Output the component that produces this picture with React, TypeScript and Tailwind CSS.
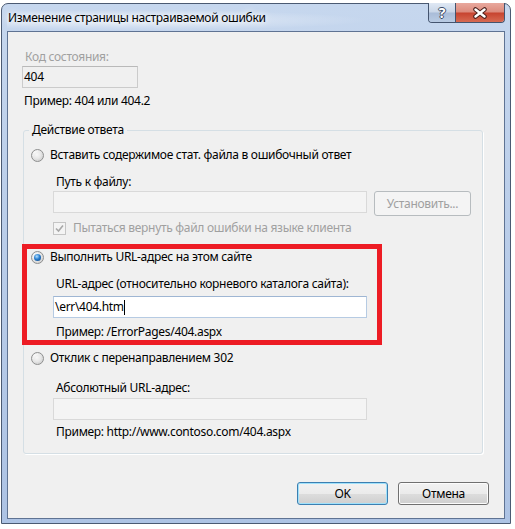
import React from "react";

function Radio({ checked }: { checked?: boolean }) {
  return (
    <span className="flex h-[13px] w-[13px] shrink-0 items-center justify-center rounded-full border border-[#8e8f8f] bg-[radial-gradient(circle_at_35%_30%,#ffffff,#d6d6d6_75%,#c4c4c4)]">
      {checked ? (
        <span className="h-[7px] w-[7px] rounded-full bg-[radial-gradient(circle_at_40%_35%,#b4e1ff,#2a7fd0_45%,#0b3c76)]" />
      ) : (
        <span className="h-[7px] w-[7px] rounded-full bg-[radial-gradient(circle_at_40%_35%,#f8f8f8,#dedede)]" />
      )}
    </span>
  );
}

function RadioRow({ checked, label }: { checked?: boolean; label: string }) {
  return (
    <div className="flex h-[16px] items-center">
      <span className="ml-[7px]">
        <Radio checked={checked} />
      </span>
      <span className="ml-[6px] leading-[16px]">{label}</span>
    </div>
  );
}

function WinButton({ label, isDefault }: { label: string; isDefault?: boolean }) {
  return (
    <div
      className={
        isDefault
          ? "flex h-[23px] w-[91px] items-center justify-center rounded-[3px] border border-[#3c7fb1] bg-[linear-gradient(180deg,#f2f2f2_0%,#ebebeb_50%,#dddddd_51%,#cfcfcf_100%)] shadow-[inset_0_0_0_1px_#9fe1fb]"
          : "flex h-[23px] w-[91px] items-center justify-center rounded-[3px] border border-[#707070] bg-[linear-gradient(180deg,#f2f2f2_0%,#ebebeb_50%,#dddddd_51%,#cfcfcf_100%)] shadow-[inset_0_0_0_1px_#fcfcfc]"
      }
    >
      {label}
    </div>
  );
}

export default function App() {
  return (
    <div className="h-[529px] w-[515px] overflow-hidden bg-white pl-[1px] pt-[3px] font-['Noto_Sans',sans-serif] text-[12px] tracking-[-0.3px] text-black">
      <div className="flex h-[521px] w-[510px] flex-col rounded-t-[7px] border border-[#4b5a72] bg-[linear-gradient(180deg,#c6d7ee_0%,#bccfea_35%,#adc3e4_100%)] px-[5px] pb-[4px]">
        {/* title bar */}
        <div className="flex h-[27px] items-start justify-between bg-[radial-gradient(ellipse_at_25%_60%,rgba(255,255,255,0.55),rgba(255,255,255,0)_45%)]">
          <div className="ml-px mt-[6px] leading-[16px] [text-shadow:0_0_6px_#fff,0_0_10px_#fff]">
            Изменение страницы настраиваемой ошибки
          </div>
          <div className="-mt-px flex h-[20px] overflow-hidden rounded-b-[4px] border border-t-0 border-[#44546e]">
            <div className="flex w-[27px] items-center justify-center border-r border-[#44546e] bg-[linear-gradient(180deg,#dfe8f4_0%,#c9d6e8_48%,#a9bcd8_52%,#b9cbe3_100%)]">
              <span className="text-[14px] font-bold leading-none tracking-normal text-white [text-shadow:1px_0_0_#3a4a66,-1px_0_0_#3a4a66,0_1px_0_#3a4a66,0_-1px_0_#3a4a66]">
                ?
              </span>
            </div>
            <div className="flex w-[48px] items-center justify-center bg-[linear-gradient(180deg,#e9a99e_0%,#dc8a7c_48%,#c7432f_52%,#d76a52_100%)]">
              <svg width="16" height="12" viewBox="0 0 16 12">
                <path d="M3.5 2.5 L12.5 9.5 M12.5 2.5 L3.5 9.5" stroke="#4a1f1a" strokeWidth="4.5" strokeLinecap="round" />
                <path d="M3.5 2.5 L12.5 9.5 M12.5 2.5 L3.5 9.5" stroke="#ffffff" strokeWidth="2.5" strokeLinecap="round" />
              </svg>
            </div>
          </div>
        </div>

        {/* client area */}
        <div className="relative flex flex-1 flex-col border border-[#5f7393] bg-[#f0f0f0] pl-[14px] pt-[17px]">
          <div className="ml-[3px] leading-[16px] text-[#a0a0a0]">Код состояния:</div>
          <div className="mt-px flex h-[22px] w-[116px] items-center border border-[#cbcbcb] border-t-[#b9b9b9] bg-[#f0f0f0] pl-[1px]">
            404
          </div>
          <div className="ml-[2px] mt-[5px] leading-[16px]">Пример: 404 или 404.2</div>

          {/* group box */}
          <div className="relative ml-px mt-[21px] w-[460px] rounded-[3px] border border-[#d5dfe5] pb-[13px] pt-[16px] shadow-[1px_1px_0_#ffffff]">
            <span className="absolute left-[5px] top-[-9px] bg-[#f0f0f0] px-[3px] leading-[16px]">
              Действие ответа
            </span>

            <RadioRow label="Вставить содержимое стат. файла в ошибочный ответ" />
            <div className="ml-[29px]">
              <div className="ml-[3px] mt-[11px] leading-[16px]">Путь к файлу:</div>
              <div className="mt-px flex items-start">
                <div className="h-[22px] w-[314px] border border-[#d9d9d9] bg-[#f4f4f4]" />
                <div className="ml-[7px] flex h-[25px] w-[97px] items-center justify-center rounded-[3px] border border-[#b7bcbf] bg-[#f4f4f4] text-[#a0a0a0]">
                  Установить...
                </div>
              </div>
              <div className="mt-[4px] flex h-[16px] items-center">
                <span className="flex h-[13px] w-[13px] items-center justify-center border border-[#c5c5c5] bg-[#f4f4f4]">
                  <svg width="9" height="9" viewBox="0 0 9 9">
                    <path d="M1 4.5 L3.5 7 L8 1.5" stroke="#a8a8a8" strokeWidth="1.6" fill="none" />
                  </svg>
                </span>
                <span className="ml-[7px] text-[#a0a0a0]">Пытаться вернуть файл ошибки на языке клиента</span>
              </div>
            </div>

            <div className="mt-[13px]">
              <RadioRow checked label="Выполнить URL-адрес на этом сайте" />
            </div>
            <div className="ml-[29px]">
              <div className="ml-[3px] mt-[11px] leading-[16px]">
                URL-адрес (относительно корневого каталога сайта):
              </div>
              <div className="mt-[4px] flex h-[22px] w-[314px] items-center border border-[#b6cbe3] border-t-[#9fb6d3] bg-white pl-[1px]">
                <span>\err\404.htm</span>
                <span className="h-[15px] w-px bg-black" />
              </div>
              <div className="ml-[3px] mt-[6px] leading-[16px]">Пример: /ErrorPages/404.aspx</div>
            </div>

            <div className="mt-[10px]">
              <RadioRow label="Отклик с перенаправлением 302" />
            </div>
            <div className="ml-[29px]">
              <div className="ml-[3px] mt-[14px] leading-[16px]">Абсолютный URL-адрес:</div>
              <div className="mt-[2px] h-[22px] w-[314px] border border-[#d9d9d9] bg-[#f4f4f4]" />
              <div className="ml-[3px] mt-[4px] leading-[16px]">Пример: http://www.contoso.com/404.aspx</div>
            </div>
          </div>

          <div className="mr-[15px] mt-[28px] flex justify-end gap-[10px]">
            <WinButton label="OK" isDefault />
            <WinButton label="Отмена" />
          </div>

          {/* red highlight annotation */}
          <div className="pointer-events-none absolute left-[14px] top-[212px] h-[101px] w-[360px] border-[5px] border-[#ed1c24]" />
        </div>
      </div>
    </div>
  );
}
